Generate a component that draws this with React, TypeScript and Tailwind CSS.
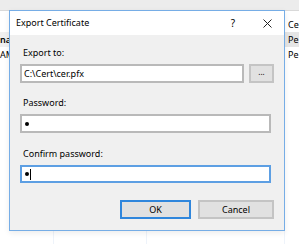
import React from 'react';

const font = { fontFamily: '"Noto Sans", "Liberation Sans", sans-serif' };

export default function App() {
  return (
    <div className="relative w-[299px] h-[244px] overflow-hidden bg-white text-black" style={font}>
      {/* background window */}
      <div className="h-[11px] bg-[#ececec] border-b border-[#d9d9d9]" />
      <div className="flex h-[233px]">
        <div className="w-[54px] shrink-0 border-r border-[#eef3fa] text-[9px] flex flex-col pt-[21px] overflow-hidden">
          <div className="h-[15px] bg-[#f0f0f0] leading-[15px] font-semibold whitespace-nowrap">nai</div>
          <div className="h-[15px] leading-[15px] whitespace-nowrap">AM</div>
        </div>
        <div className="w-[93px] shrink-0 border-r border-[#eef3fa]" />
        <div className="w-[138px] shrink-0 border-r border-[#eef3fa]" />
        <div className="flex-1 min-w-0 overflow-hidden text-[9px] flex flex-col pt-[6px]">
          <div className="h-[15px] leading-[15px] pl-[3px] whitespace-nowrap">Ce</div>
          <div className="h-[15px] leading-[15px] bg-[#e5e5e5] pl-[3px] whitespace-nowrap">Pe</div>
          <div className="h-[15px] leading-[15px] pl-[3px] whitespace-nowrap">Pe</div>
        </div>
      </div>

      {/* dialog */}
      <div className="absolute left-[9px] top-[10px] w-[276px] h-[221px] border border-[#76ade6] bg-[#f0f0f0] flex flex-col shadow-[0_2px_6px_rgba(0,0,0,0.08)]">
        <div className="h-[24px] bg-white flex items-center pl-[6px] pr-[12px] text-[9px]">
          <span className="flex-1">Export Certificate</span>
          <span className="w-[10px] text-center mr-[25px] text-[10px]">?</span>
          <svg width="9" height="9" viewBox="0 0 9 9" className="mt-[1px]">
            <path d="M0.5 0.5 L8.5 8.5 M8.5 0.5 L0.5 8.5" stroke="#222" strokeWidth="1" fill="none" />
          </svg>
        </div>
        <div className="flex-1 flex flex-col pl-[10px] pr-[13px] pt-[12px] text-[9px]">
          <div className="h-[12px] leading-[12px] pl-[3px]">Export to:</div>
          <div className="flex gap-[5px] mt-[5px] mr-[-3px]">
            <div className="flex-1 h-[19px] bg-white border-2 border-[#b9b9b9] flex items-center pl-[2px]">C:\Cert\cer.pfx</div>
            <div className="w-[25px] h-[19px] bg-[#e1e1e1] border-2 border-[#c4c4c4] flex items-center justify-center text-[8px] leading-none pb-[3px]">...</div>
          </div>
          <div className="h-[12px] leading-[12px] pl-[3px] mt-[14px]">Password:</div>
          <div className="h-[19px] mt-[5px] bg-white border-2 border-[#b9b9b9] flex items-center pl-[3px]">
            <span className="w-[4px] h-[4px] rounded-full bg-black" />
          </div>
          <div className="h-[12px] leading-[12px] pl-[3px] mt-[15px]">Confirm password:</div>
          <div className="h-[18px] mt-[5px] bg-white border-2 border-[#5d9fe3] flex items-center pl-[3px]">
            <span className="w-[4px] h-[4px] rounded-full bg-black" />
            <span className="w-[1px] h-[11px] bg-black ml-[1px]" />
          </div>
          <div className="flex justify-end gap-[7px] mt-[17px] mr-[-3px]">
            <div className="w-[71px] h-[19px] bg-[#e1e1e1] border-2 border-[#2f86dc] flex items-center justify-center">OK</div>
            <div className="w-[76px] h-[19px] bg-[#e1e1e1] border-2 border-[#c4c4c4] flex items-center justify-center">Cancel</div>
          </div>
        </div>
      </div>
    </div>
  );
}
